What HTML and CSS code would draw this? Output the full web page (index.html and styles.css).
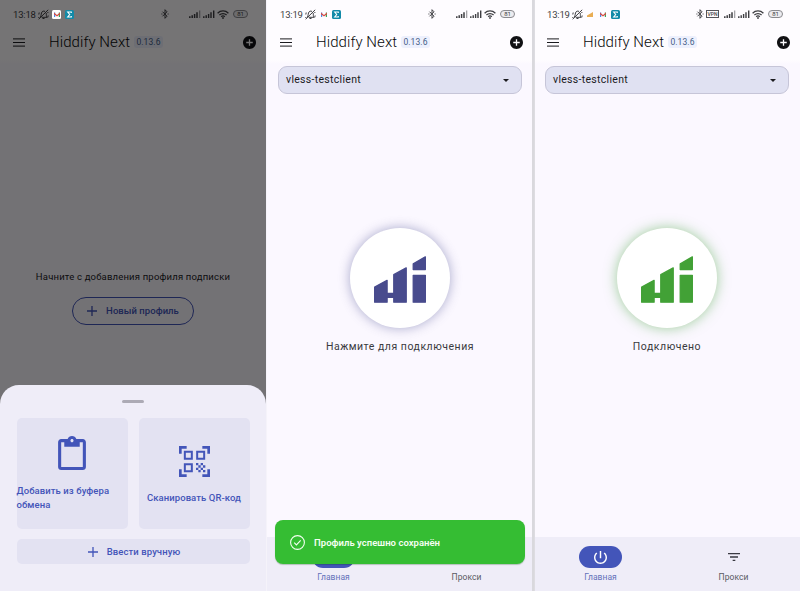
FILE: index.html
```html
<!DOCTYPE html>
<html lang="ru">
<head>
<meta charset="utf-8">
<title>Hiddify Next</title>
<link rel="stylesheet" href="styles.css">
</head>
<body>
<svg class="defs" aria-hidden="true">
  <symbol id="menu" viewBox="0 0 12 9"><path d="M0 .9h12M0 4.5h12M0 8.1h12" stroke="currentColor" stroke-width="1"/></symbol>
  <symbol id="add-circle" viewBox="2 2 20 20"><path fill="currentColor" d="M12 2C6.48 2 2 6.48 2 12s4.48 10 10 10 10-4.48 10-10S17.52 2 12 2zm5 11h-4v4h-2v-4H7v-2h4V7h2v4h4v2z"/></symbol>
  <symbol id="plus" viewBox="0 0 10 10"><path d="M5 0v10M0 5h10" stroke="currentColor" stroke-width="1.3"/></symbol>
  <symbol id="bell-off" viewBox="0 0 11 11"><path d="M2.2 8c1-1 .8-2.300 1.300-4C4 2.200 5.400 1.700 7 2.400M8.200 4c.3 1.800-.2 3 .8 4.300H3.700M4.500 9.500h2M.7 10.200 10.200.8M.8 5.500l.4-2M9.700 8.500l.5-2M1 8l-.3 1M9.500 3l.7 1" fill="none" stroke="currentColor" stroke-width="1"/></symbol>
  <symbol id="gmail" viewBox="0 0 6 5"><path d="M0 .5h1.200V5H0z" fill="#4b86e8"/><path d="M4.800.5H6V5H4.800z" fill="#3aa660"/><path d="M0 .5 3 2.900 6 .5v1.700L3 4.600 0 2.200z" fill="#d94b42"/></symbol>
  <symbol id="sigma" viewBox="0 0 9 9"><rect width="9" height="9" rx="1.500" fill="#128aa8"/><path d="M6.300 2.900V2H2.700l2 2.500-2 2.500h3.600v-.9" fill="none" stroke="#fff" stroke-width="1.100"/></symbol>
  <symbol id="bluetooth" viewBox="0 0 8 10"><path d="M1.500 2.700 6 7.200 4 9.300V.7l2 2.100-4.500 4.500M.4 5h1M6.600 5h1" fill="none" stroke="currentColor" stroke-width="1"/></symbol>
  <symbol id="signal" viewBox="0 0 12 8"><path d="M.8 8V6.300M3.200 8V5.300M5.600 8V4M8 8V2.300" stroke="currentColor" stroke-width="1.500"/><path d="M10.700 8V.5" stroke="currentColor" stroke-width="1.100" opacity=".55"/></symbol>
  <symbol id="signal-full" viewBox="0 0 12 8"><path d="M.8 8V6.300M3.200 8V5.300M5.600 8V4M8 8V2.300M10.700 8V.5" stroke="currentColor" stroke-width="1.400"/></symbol>
  <symbol id="wifi" viewBox="0 0 12 9"><path d="M.6 3.200C3.600.2 8.400.2 11.400 3.200M2.400 5C4.400 3 7.600 3 9.600 5M4.200 6.700c1-1 2.600-1 3.600 0" fill="none" stroke="currentColor" stroke-width="1.250"/><circle cx="6" cy="8" r=".9" fill="currentColor"/></symbol>
  <symbol id="chevron" viewBox="0 0 6 3"><path d="M0 0h6L3 3z" fill="currentColor"/></symbol>
  <symbol id="power" viewBox="3 3 18 18"><path fill="currentColor" d="M13 3h-2v10h2V3zm4.830 2.170-1.420 1.420C17.990 7.860 19 9.810 19 12c0 3.870-3.130 7-7 7s-7-3.130-7-7c0-2.190 1.010-4.140 2.580-5.420L6.170 5.170C4.230 6.820 3 9.260 3 12c0 4.970 4.030 9 9 9s9-4.030 9-9c0-2.740-1.230-5.180-3.170-6.830z"/></symbol>
  <symbol id="filter" viewBox="3 6 18 12"><path fill="currentColor" d="M10 18h4v-2h-4v2zM3 6v2h18V6H3zm3 7h12v-2H6v2z"/></symbol>
  <symbol id="paste" viewBox="3 0 18 22"><path fill="currentColor" d="M19 2h-4.180C14.400.84 13.300 0 12 0S9.600.84 9.180 2H5c-1.100 0-2 .9-2 2v16c0 1.100.9 2 2 2h14c1.100 0 2-.9 2-2V4c0-1.100-.9-2-2-2zm-7 0c.55 0 1 .45 1 1s-.45 1-1 1-1-.45-1-1 .45-1 1-1zm7 18H5V4h2v3h10V4h2v16z"/></symbol>
  <symbol id="qr" viewBox="0 0 93 93"><path d="M4 23V4h19M70 4h19v19M89 70v19H70M23 89H4V70" fill="none" stroke="currentColor" stroke-width="8"/><path d="M17.500 17.500h21v21h-21zM54.500 17.500h21v21h-21zM17.500 54.500h21v21h-21z" fill="none" stroke="currentColor" stroke-width="6"/><path fill="currentColor" d="M51 51h7v7h-7zM65 51h7v7h-7zM58 58h7v7h-7zM72 58h7v7h-7zM51 65h7v7h-7zM65 65h7v7h-7zM58 72h7v7h-7zM72 72h7v7h-7z"/></symbol>
  <symbol id="logo" viewBox="192 122 155 139"><path fill="currentColor" stroke="currentColor" stroke-width="4" stroke-linejoin="round" d="M194 214l37-20v39h20v-56l37-20v102h-37v-14h-20v14h-37zM309 179h36v80h-36zM309 145l36-21v38h-36z"/></symbol>
</svg>
<main class="screens">
  <section class="phone phone--dim">
    <div class="status">
      <span class="clock">13:18</span>
      <svg class="bell"><use href="#bell-off"/></svg>
      <span class="apps"><span class="tile"><svg class="gmail"><use href="#gmail"/></svg></span><svg class="sigma"><use href="#sigma"/></svg></span>
      <span class="system"><svg class="bluetooth"><use href="#bluetooth"/></svg><span class="vpn vpn--off"></span><svg class="signal"><use href="#signal"/></svg><svg class="signal"><use href="#signal-full"/></svg><svg class="wifi"><use href="#wifi"/></svg><span class="battery">81</span></span>
    </div>
    <header class="appbar"><svg class="menu"><use href="#menu"/></svg><h1>Hiddify Next</h1><span class="version">0.13.6</span><svg class="add"><use href="#add-circle"/></svg></header>
    <div class="empty">
      <p>Начните с добавления профиля подписки</p>
      <button class="new-profile"><svg><use href="#plus"/></svg><span>Новый профиль</span></button>
    </div>
    <div class="scrim"></div>
    <div class="sheet">
      <span class="handle"></span>
      <div class="tiles">
        <button class="card"><svg class="paste"><use href="#paste"/></svg><span>Добавить из буфера обмена</span></button>
        <button class="card card--qr"><svg class="qr"><use href="#qr"/></svg><span>Сканировать QR-код</span></button>
      </div>
      <button class="manual"><svg><use href="#plus"/></svg><span>Ввести вручную</span></button>
    </div>
  </section>

  <section class="phone phone--idle">
    <div class="status">
      <span class="clock">13:19</span>
      <svg class="bell"><use href="#bell-off"/></svg>
      <span class="apps"><span class="tile"><svg class="gmail"><use href="#gmail"/></svg></span><svg class="sigma"><use href="#sigma"/></svg></span>
      <span class="system"><svg class="bluetooth"><use href="#bluetooth"/></svg><span class="vpn vpn--off"></span><svg class="signal"><use href="#signal"/></svg><svg class="signal"><use href="#signal-full"/></svg><svg class="wifi"><use href="#wifi"/></svg><span class="battery">81</span></span>
    </div>
    <header class="appbar"><svg class="menu"><use href="#menu"/></svg><h1>Hiddify Next</h1><span class="version">0.13.6</span><svg class="add"><use href="#add-circle"/></svg></header>
    <div class="profile"><span>vless-testclient</span><svg><use href="#chevron"/></svg></div>
    <div class="connect"><span class="orb"><svg><use href="#logo"/></svg></span><p>Нажмите для подключения</p></div>
    <nav class="nav">
      <a class="tab tab--active"><span class="pill"><svg class="power"><use href="#power"/></svg></span><span>Главная</span></a>
      <a class="tab"><span class="pill"><svg class="filter"><use href="#filter"/></svg></span><span>Прокси</span></a>
    </nav>
    <div class="toast"><svg viewBox="0 0 15 15"><circle cx="7.500" cy="7.500" r="6.900"/><path d="M4.200 7.700l2.200 2.200 4.300-4.500"/></svg><span>Профиль успешно сохранён</span></div>
  </section>

  <section class="phone phone--connected">
    <div class="status">
      <span class="clock">13:19</span>
      <svg class="bell"><use href="#bell-off"/></svg>
      <span class="apps"><svg class="stairs" viewBox="0 0 6 5"><path d="M0 5V3.500L6 0v5z" fill="#e9ad54"/></svg><span class="tile"><svg class="gmail"><use href="#gmail"/></svg></span><svg class="sigma"><use href="#sigma"/></svg></span>
      <span class="system"><svg class="bluetooth"><use href="#bluetooth"/></svg><span class="vpn">VPN</span><svg class="signal"><use href="#signal"/></svg><svg class="signal"><use href="#signal-full"/></svg><svg class="wifi"><use href="#wifi"/></svg><span class="battery">81</span></span>
    </div>
    <header class="appbar"><svg class="menu"><use href="#menu"/></svg><h1>Hiddify Next</h1><span class="version">0.13.6</span><svg class="add"><use href="#add-circle"/></svg></header>
    <div class="profile"><span>vless-testclient</span><svg><use href="#chevron"/></svg></div>
    <div class="connect"><span class="orb"><svg><use href="#logo"/></svg></span><p>Подключено</p></div>
    <nav class="nav">
      <a class="tab tab--active"><span class="pill"><svg class="power"><use href="#power"/></svg></span><span>Главная</span></a>
      <a class="tab"><span class="pill"><svg class="filter"><use href="#filter"/></svg></span><span>Прокси</span></a>
    </nav>
  </section>
</main>
</body>
</html>
```
FILE: styles.css
```css
* { box-sizing: border-box; }
body { margin: 0; font-family: Roboto, "Noto Sans", sans-serif; color: #1b1b1f; overflow: hidden; }
svg { display: block; flex: none; }
h1, p { margin: 0; font-weight: 400; }
button { font: inherit; border: 0; padding: 0; margin: 0; background: none; }
.defs { position: absolute; width: 0; height: 0; }

.screens { display: grid; grid-template-columns: 267px 267px 266px; height: 591px; }
.phone { position: relative; display: flex; flex-direction: column; overflow: hidden; min-width: 0; background: linear-gradient(#fefcff 60px, #fbf8ff 64px); }
.phone--dim { border-right: 1px solid #f5f3fa; }
.phone--idle { border-right: 2px solid #d9d8dd; }
.phone--connected { box-shadow: inset 1px 0 #dddce1; }

/* Status bar */
.status { flex: none; display: flex; align-items: center; height: 28px; padding: 0 0 0 13px; color: #3e3e42; white-space: nowrap; }
.clock { width: 25px; font-size: 9.500px; letter-spacing: -.2px; }
.bell { width: 11px; height: 11px; }
.apps { display: flex; align-items: center; margin-left: 3px; }
.phone--dim .apps { position: relative; z-index: 2; }
.tile { display: grid; place-items: center; width: 9px; height: 9px; margin-right: 4px; border-radius: 1.500px; }
.phone--dim .tile { background: #fff; }
.gmail { width: 6px; height: 5px; }
.sigma { width: 9px; height: 9px; }
.stairs { width: 6px; height: 5px; margin: 0 5px 0 1px; }
.system { display: flex; align-items: center; width: 89px; margin-left: auto; margin-right: 16px; }
.phone--dim .system { margin-right: 17px; }
.bluetooth { width: 8px; height: 10px; margin-left: 1px; }
.vpn { width: 13px; height: 8px; margin: 0 5px 0 2px; border: 1px solid #55555a; font-size: 5px; line-height: 6px; font-weight: 500; text-align: center; }
.vpn--off { visibility: hidden; }
.signal { width: 12px; height: 8px; margin-right: 2px; }
.wifi { width: 12px; height: 9px; margin-right: 4px; }
.battery { width: 15px; height: 8px; border: 1px solid #8a8a8e; border-radius: 4px; background: #ecebf0; font-size: 6px; line-height: 6px; text-align: center; }

/* App bar */
.appbar { flex: none; display: flex; align-items: center; height: 28px; padding: 0 9px 0 13px; }
.phone--dim .appbar, .phone--connected .appbar { padding-right: 10px; }
.menu { width: 12px; height: 9px; margin-right: 24px; }
h1 { width: 82px; font-size: 15px; line-height: 20px; font-weight: 300; letter-spacing: .07px; white-space: nowrap; color: #08080a; }
.version { width: 29px; height: 12px; margin-left: 3px; border-radius: 3px; background: #edf0fd; color: #455d87; font-size: 8.500px; line-height: 12px; letter-spacing: .1px; text-align: center; }
.add { width: 13px; height: 13px; margin-left: auto; color: #111114; }

/* Empty state below the scrim */
.empty { margin-top: 214px; display: flex; flex-direction: column; align-items: center; font-size: 9.500px; line-height: 14px; }
.empty p { letter-spacing: .18px; white-space: nowrap; }
.new-profile { display: flex; align-items: center; justify-content: center; gap: 9px; width: 122px; height: 28px; margin-top: 13px; border: 1px solid #4355b9; border-radius: 14px; color: #4355b9; font-weight: 500; letter-spacing: .05px; white-space: nowrap; }
.new-profile svg, .manual svg { width: 10px; height: 10px; }
.scrim { position: absolute; inset: 0; background: rgba(0, 0, 0, .54); }

/* Bottom sheet */
.sheet { position: absolute; left: 0; right: 0; bottom: 0; height: 206px; padding: 0 16.500px; border-radius: 19px 19px 0 0; background: #efedf8; display: flex; flex-direction: column; color: #4355b9; }
.handle { flex: none; width: 22px; height: 3px; margin: 15px auto 14.500px; border-radius: 2px; background: #acaab5; }
.tiles { display: grid; grid-template-columns: 1fr 1fr; gap: 11px; height: 111.500px; }
.card, .manual { border-radius: 5px; background: #e3e2f2; color: inherit; font-size: 9.500px; font-weight: 500; line-height: 14px; letter-spacing: .08px; }
.card { display: flex; flex-direction: column; align-items: center; padding-top: 18.500px; text-align: left; }
.card--qr { padding-top: 28px; white-space: nowrap; }
.paste { width: 28px; height: 34px; margin-bottom: 13.500px; }
.qr { width: 31px; height: 31px; margin-bottom: 14px; }
.manual { display: flex; align-items: center; justify-content: center; gap: 9px; height: 25px; margin-top: 10px; padding-left: 2px; }

/* Home */
.profile { flex: none; display: flex; align-items: center; justify-content: space-between; width: 244px; height: 28px; margin: 10px 0 0 11px; padding: 0 12px 1px 7px; border: 1px solid #c6c5d8; border-radius: 9px; background: #e0e1f2; font-size: 10.500px; letter-spacing: .3px; }
.profile svg { width: 6px; height: 3px; margin-top: 1px; }
.connect { display: flex; flex-direction: column; align-items: center; width: 266px; margin-top: 134px; }
.orb { display: grid; place-items: center; width: 100px; height: 100px; border-radius: 50%; background: #fff; color: #484b8d; box-shadow: 0 0 12px rgba(72, 75, 141, .46); }
.orb svg { width: 52px; height: 47px; margin-top: 3px; }
.connect p { margin-top: 11px; font-size: 10.500px; line-height: 16px; letter-spacing: .52px; white-space: nowrap; color: #3a3a3e; }
.phone--connected .orb { color: #42a136; box-shadow: 0 0 13px rgba(66, 161, 54, .5); }

.nav { display: grid; grid-template-columns: 133px 133px; height: 54px; margin-top: auto; background: #efedf8; }
.phone--connected .nav { box-shadow: inset 1px 0 #dddce1; }
.tab { display: flex; flex-direction: column; align-items: center; padding-top: 9px; color: #5a5a62; font-size: 8.500px; line-height: 12px; letter-spacing: .05px; }
.pill { display: grid; place-items: center; width: 43px; height: 22px; margin-bottom: 3px; border-radius: 11px; color: #3a3a42; }
.tab--active { color: #6472ba; }
.tab--active .pill { background: #4355b9; color: #fff; }
.power { width: 13px; height: 13px; }
.filter { width: 12px; height: 8px; }
.toast { position: absolute; left: 8px; bottom: 27px; width: 250px; height: 44px; display: flex; align-items: center; gap: 9px; padding-left: 15px; border-radius: 8px; background: #35bd33; box-shadow: 0 1px 1px rgba(0, 60, 0, .25); color: #f4fff2; font-size: 9.500px; font-weight: 600; letter-spacing: .03px; white-space: nowrap; }
.toast svg { width: 15px; height: 15px; fill: none; stroke: currentColor; stroke-width: 1.100; }
```
